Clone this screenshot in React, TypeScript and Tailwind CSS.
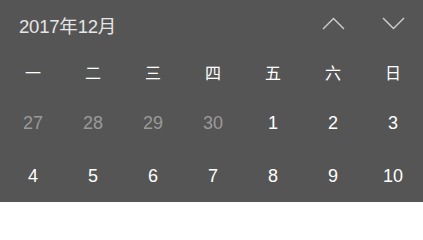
import React from "react";

const font = { fontFamily: '"Liberation Sans", "Noto Sans CJK SC", sans-serif' };

const weekdays = ["一", "二", "三", "四", "五", "六", "日"];
const rows: { d: number; muted: boolean }[][] = [
  [
    { d: 27, muted: true },
    { d: 28, muted: true },
    { d: 29, muted: true },
    { d: 30, muted: true },
    { d: 1, muted: false },
    { d: 2, muted: false },
    { d: 3, muted: false },
  ],
  [4, 5, 6, 7, 8, 9, 10].map((d) => ({ d, muted: false })),
];

function Chevron({ up }: { up: boolean }) {
  return (
    <svg width="23" height="13" viewBox="0 0 23 13" fill="none">
      <path
        d={up ? "M1 12 L11.5 1.5 L22 12" : "M1 1 L11.5 11.5 L22 1"}
        stroke="#d0d0d0"
        strokeWidth="1.4"
      />
    </svg>
  );
}

export default function App() {
  return (
    <div className="w-[423px] h-[202px] bg-[#555555] overflow-hidden pl-[3px]" style={font}>
      <div className="grid grid-cols-[repeat(7,60px)] h-[50px] items-center">
        <div className="col-span-5 pl-[16px] pt-[5px] text-[18.5px] tracking-[-0.2px] leading-none text-[#e6e6e6]">
          2017年12月
        </div>
        <div className="flex justify-center mt-[-3px]">
          <Chevron up />
        </div>
        <div className="flex justify-center mt-[-3px]">
          <Chevron up={false} />
        </div>
      </div>
      <div className="grid grid-cols-[repeat(7,60px)] h-[46px] items-center">
        {weekdays.map((w) => (
          <div key={w} className="text-center text-[16px] leading-none pt-[2px] text-white">
            {w}
          </div>
        ))}
      </div>
      {rows.map((r, i) => (
        <div key={i} className="grid grid-cols-[repeat(7,60px)] h-[53px] items-center">
          {r.map((c) => (
            <div
              key={c.d}
              className={`text-center text-[18px] leading-none ${c.muted ? "text-[#9a9a9a]" : "text-white"}`}
            >
              {c.d}
            </div>
          ))}
        </div>
      ))}
    </div>
  );
}
